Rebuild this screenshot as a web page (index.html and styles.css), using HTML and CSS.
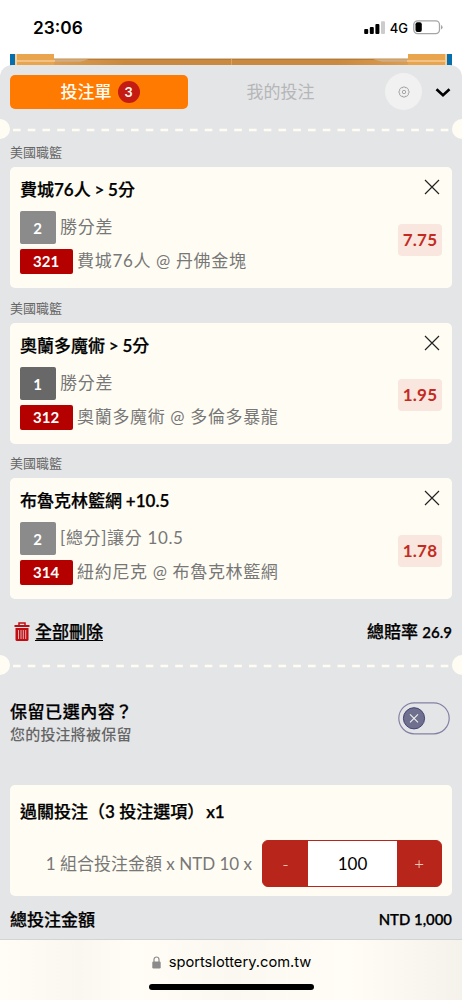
FILE: index.html
```html
<!DOCTYPE html>
<html lang="zh-Hant">
<head>
<meta charset="utf-8">
<meta name="viewport" content="width=device-width">
<title>投注單</title>
<link rel="stylesheet" href="styles.css">
</head>
<body>
<div class="phone">
  <header class="status">
    <span class="clock">23:06</span>
    <div class="status-right">
      <svg class="signal" width="22" height="13" viewBox="0 0 22 13"><rect x="0.2" y="8" width="4" height="5" rx="1"/><rect x="5.8" y="6" width="4" height="7" rx="1"/><rect x="11.4" y="3" width="4" height="10" rx="1"/><rect x="17" y="0.3" width="4" height="12.7" rx="1" fill="#ccc"/></svg>
      <span class="network">4G</span>
      <svg class="battery" width="30" height="15" viewBox="0 0 30 15"><rect x=".8" y=".8" width="25.7" height="12.8" rx="3.8" fill="none" stroke="#a5a5a5" stroke-width="1.3"/><rect x="2.5" y="2.3" width="6.3" height="9.8" rx="2"/><path d="M28 5v4.5q1.6-.8 1.6-2.2T28 5z" fill="#a5a5a5"/></svg>
    </div>
  </header>

  <main class="page">
    <svg class="court" width="442" height="22" viewBox="0 0 442 22">
      <defs>
        <linearGradient id="wood"><stop offset="0" stop-color="#dd9d50"/><stop offset=".2" stop-color="#c98a3f"/><stop offset=".8" stop-color="#c98a3f"/><stop offset="1" stop-color="#dd9d50"/></linearGradient>
      </defs>
      <rect width="442" height="22" fill="#e9a54e"/>
      <rect width="5" height="22" fill="#056fae"/><rect x="437" width="5" height="22" fill="#056fae"/>
      <path d="M5 0h2v22H5zM435 0h2v22h-2z" fill="#f5cf9c"/>
      <path d="M44 4.500h354v6.500H44z" fill="url(#wood)"/>
      <path d="M44 4.500h354v1.300H44z" fill="#a8763f"/>
      <path d="M44 5.200h35l-9 2.600H44zM398 5.200h-35l9 2.600h26z" fill="#d2ad80"/>
      <path d="M7 6h38v2H7zM397 6h38v2h-38z" fill="#f3c184"/>
      <path d="M221 5h1v6h-1z" fill="#dfa15b"/>
      <path d="M44 0h354v4.500H44z" fill="#fff"/>
    </svg>

    <div class="sheet">
      <nav class="tabs">
        <div class="tab tab-active"><span>投注單</span><span class="count">3</span></div>
        <div class="tab tab-idle">我的投注</div>
        <div class="settings"><svg width="12" height="12" viewBox="0 0 12 12" fill="none" stroke="#929292" stroke-width=".8"><path d="M4.800 1h2.400l.5 1 1.100-.3 1.600 1.500-.3 1.200.9.600v2l-.9.600.3 1.200-1.600 1.500-1.100-.3-.5 1H4.800l-.5-1-1.100.3-1.600-1.500.3-1.200L1 7V5l.9-.6-.3-1.200 1.600-1.500 1.100.3z"/><circle cx="6" cy="6" r="1.700"/></svg></div>
        <svg class="chevron" width="16" height="11" viewBox="0 0 16 11"><path d="M1.500 2.300 8 8.300l6.500-6" fill="none" stroke="#000" stroke-width="2.600"/></svg>
      </nav>

      <svg class="divider" width="462" height="20" viewBox="0 0 462 20"><circle cx="0" cy="10" r="10"/><circle cx="462" cy="10" r="10"/><path d="M13 11H449" stroke-dasharray="7.600 7.150"/></svg>

      <section class="bet">
        <div class="league">美國職籃</div>
        <article class="card">
          <div class="card-head"><h2>費城<i>76</i>人 <i>&gt; 5</i>分</h2><svg class="close" width="16" height="16" viewBox="0 0 16 16"><path d="m1 1 14 14M15 1 1 15"/></svg></div>
          <div class="card-body">
            <div class="lines">
              <div class="line"><b class="pick">2</b><span>勝分差</span></div>
              <div class="line match"><b class="code">321</b><span>費城76人 @ 丹佛金塊</span></div>
            </div>
            <div class="odds">7.75</div>
          </div>
        </article>
      </section>
      <section class="bet">
        <div class="league">美國職籃</div>
        <article class="card">
          <div class="card-head"><h2>奧蘭多魔術 <i>&gt; 5</i>分</h2><svg class="close" width="16" height="16" viewBox="0 0 16 16"><path d="m1 1 14 14M15 1 1 15"/></svg></div>
          <div class="card-body">
            <div class="lines">
              <div class="line"><b class="pick home">1</b><span>勝分差</span></div>
              <div class="line match"><b class="code">312</b><span>奧蘭多魔術 @ 多倫多暴龍</span></div>
            </div>
            <div class="odds">1.95</div>
          </div>
        </article>
      </section>
      <section class="bet">
        <div class="league">美國職籃</div>
        <article class="card">
          <div class="card-head"><h2>布魯克林籃網 <i>+10.5</i></h2><svg class="close" width="16" height="16" viewBox="0 0 16 16"><path d="m1 1 14 14M15 1 1 15"/></svg></div>
          <div class="card-body">
            <div class="lines">
              <div class="line"><b class="pick">2</b><span class="spread">[總分]讓分 10.5</span></div>
              <div class="line match"><b class="code">314</b><span>紐約尼克 @ 布魯克林籃網</span></div>
            </div>
            <div class="odds">1.78</div>
          </div>
        </article>
      </section>

      <div class="actions">
        <a class="delete"><svg width="16" height="19" viewBox="0 0 16 19"><path d="M5 3V1h6v2" fill="none" stroke="#c00d12" stroke-width="1.500"/><path d="M.5 3h15v2H.5z" fill="#c00d12"/><path d="M1.500 6h13v11.500q0 1.500-1.500 1.500H3q-1.500 0-1.500-1.500z" fill="#c00d12"/><path d="M4.500 8v9M7 8v9M9.300 8v9M11.700 8v9" stroke="#f2dcdd" stroke-width=".8"/></svg><span>全部刪除</span></a>
        <div class="total-odds">總賠率 <span>26.9</span></div>
      </div>

      <svg class="divider" width="462" height="20" viewBox="0 0 462 20"><circle cx="0" cy="10" r="10"/><circle cx="462" cy="10" r="10"/><path d="M13 11H449" stroke-dasharray="7.600 7.150"/></svg>

      <div class="keep">
        <div><h3>保留已選內容？</h3><p>您的投注將被保留</p></div>
        <svg width="52" height="33" viewBox="0 0 52 33"><rect x=".8" y=".8" width="50.400" height="31" rx="15.500" fill="none" stroke="#8480a3" stroke-width="1.200"/><circle cx="16" cy="16.300" r="10.600" fill="#6f6f8e" stroke="#454276"/><path d="m12 12.300 8 8M20 12.300l-8 8" stroke="#eee" stroke-width="1.200"/></svg>
      </div>

      <section class="stake-card">
        <h2>過關投注（<i>3</i> 投注選項）<i class="times">x1</i></h2>
        <div class="stake">
          <span class="formula">1 組合投注金額 x NTD 10 x</span>
          <div class="stepper"><span>-</span><div class="amount">100</div><span>+</span></div>
        </div>
      </section>

      <div class="total"><b>總投注金額</b><b class="sum">NTD 1,000</b></div>
    </div>
  </main>

  <footer class="browser">
    <div class="url"><svg width="9" height="13" viewBox="0 0 9 13"><path d="M2 6V3.500a2.500 2.500 0 0 1 5 0V6" fill="none" stroke="#8b8b8b" stroke-width="1.200"/><rect x=".3" y="5.500" width="8.400" height="7" rx="1.200" fill="#8b8b8b"/></svg><span>sportslottery.com.tw</span></div>
    <div class="indicator"></div>
  </footer>
</div>
</body>
</html>
```
FILE: styles.css
```css
* { box-sizing: border-box; }
body { margin: 0; background: #fff; font-family: Lato, "Noto Sans CJK TC", sans-serif; color: #000; }
h2, h3, p { margin: 0; }
h2, h3, .delete, .total-odds, .total { -webkit-text-stroke: .25px currentColor; }
h2 i { font-style: normal; font-weight: 600; }
svg { display: block; flex: none; }
.phone { width: 462px; height: 1000px; overflow: hidden; display: flex; flex-direction: column; white-space: nowrap; }
.status { height: 54px; flex: none; padding: 1px 19px 0 33px; display: flex; align-items: center; justify-content: space-between; }
.clock { font: 600 17.3px Inter, sans-serif; }
.status-right { display: flex; align-items: center; }
.network { font: 500 13px Inter, sans-serif; margin: 0 5px 0 4px; }
.page { height: 885px; flex: none; }
.court { margin: 0 10px -11px; }
.sheet { position: relative; height: 874px; background: #e4e5e7; border-radius: 12px 12px 0 0; padding-top: 8px; }
.tabs { height: 38px; display: flex; align-items: center; padding: 0 11px 0 10px; }
.tab { height: 34px; display: flex; align-items: center; justify-content: center; font-size: 17px; line-height: 22px; padding-bottom: 1px; }
.tab-active { width: 178px; padding: 0 0 1px 2px; border-radius: 5px; background: #ff7a00; color: #fffdf3; font-weight: 500; gap: 6px; }
.count { width: 22px; height: 22px; border-radius: 50%; background: #c41b12; font-size: 14px; line-height: 22px; text-align: center; font-weight: 700; }
.tab-idle { width: 185px; color: #b5b6b8; }
.settings { width: 37px; height: 37px; border-radius: 50%; background: #f1f1f1; display: grid; place-items: center; margin: -1px 0 0 12px; }
.chevron { margin-left: auto; }
.divider { margin-top: 8px; fill: #fffdf3; stroke: none; }
.divider path { stroke: #fffdf3; stroke-width: 2.4; }
.bet { height: 155.5px; padding: 0 10px; }
.league { height: 28px; font-size: 13px; line-height: 27px; color: #666; }
.card { height: 121px; border-radius: 5px; background: #fffdf3; padding: 12px 10px 0; }
.card-head { height: 20px; display: flex; justify-content: space-between; }
.card-head h2, .stake-card h2 { font-size: 17px; line-height: 20px; font-weight: 500; }
.card-head h2 { line-height: 21px; word-spacing: -.5px; }
.close { stroke: #222; stroke-width: 1.2; fill: none; margin-right: 2px; }
.card-body { display: flex; justify-content: space-between; padding-top: 12px; }
.lines { color: #777; font-size: 17px; letter-spacing: .65px; margin-left: -.4px; }
.line { display: flex; align-items: center; height: 33px; gap: 4.500px; line-height: 24px; }
.line span { padding-bottom: 1px; }
.match { height: 25px; margin-top: 5px; }
.pick, .code { letter-spacing: 0; color: #fff; font-size: 15px; text-align: center; border-radius: 2px; }
.pick { width: 36px; height: 33px; line-height: 34px; background: #8b8b8b; }
.home { background: #686868; }
.code { width: 53px; height: 25px; line-height: 25px; background: #b50000; }
.odds { margin-top: 12.500px; width: 44px; height: 32px; border-radius: 4px; background: #f8e6df; color: #c42b20; font-weight: 700; font-size: 17px; line-height: 32px; letter-spacing: .2px; text-align: center; }
.actions { height: 55px; padding: 14px 10px 0 14px; display: flex; align-items: flex-start; justify-content: space-between; font-size: 17px; line-height: 24px; font-weight: 500; }
.delete { display: flex; align-items: center; gap: 5px; text-decoration: underline; text-decoration-thickness: 1px; text-underline-offset: 2px; }
.total-odds span { font-size: 15px; font-weight: 600; }
.actions + .divider { margin-top: -6px; }
.keep { height: 110px; padding: 27px 12px 0 10px; display: flex; justify-content: space-between; }
.keep h3 { font-size: 17px; line-height: 20px; font-weight: 500; letter-spacing: .55px; }
.keep p { font-size: 15px; line-height: 20px; color: #666; margin-top: 2px; font-weight: 500; letter-spacing: .2px; }
.stake-card { height: 111px; margin: 0 10px; padding: 17px 10px 0; border-radius: 5px; background: #fffdf3; }
.times { margin-left: 2px; }
.stake { display: flex; align-items: center; justify-content: flex-end; gap: 10px; margin-top: 18px; }
.formula { font-size: 17px; color: #777; padding-bottom: 1px; }
.stepper { width: 180px; height: 47px; border: 1px solid #b7251b; border-radius: 6px; overflow: hidden; background: #b7251b; display: grid; grid-template-columns: 45px 89px 44px; align-items: stretch; text-align: center; line-height: 46px; font-size: 17px; }
.stepper span { color: #f6c8bd; font-family: "Noto Sans", sans-serif; font-weight: 300; }
.amount { background: #fff; }
.total { padding: 3px 10px 0; height: 43px; display: flex; align-items: center; justify-content: space-between; font-size: 17px; font-weight: 500; }
.total b { font-weight: 500; }
.total .sum { font-size: 14.900px; font-weight: 600; }
.browser { position: relative; height: 61px; flex: none; border-top: 1px solid #d3d4d5; background: linear-gradient(90deg, #fffdf6, #f9f7f0 17%, #fffdf5 29%, #faf8f0 50%, #fffdf5 75%, #f4f2ea); }
.url { display: flex; align-items: center; justify-content: center; gap: 8px; padding: 12px 0 0 1px; font: 400 14.700px/20px Inter, sans-serif; }
.indicator { width: 165px; height: 6px; margin: 12px auto 0; border-radius: 3px; background: #000; }
```
